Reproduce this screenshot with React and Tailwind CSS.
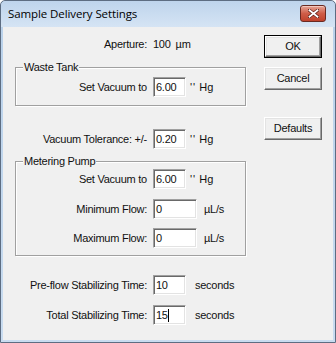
import React from 'react';

const sunken = 'border border-t-[#a0a0a0] border-l-[#a0a0a0] border-b-white border-r-white shadow-[inset_1px_1px_0_#696969,inset_-1px_-1px_0_#e3e3e3]';

const Field = ({ value, w = 'w-[33px]', caret }) => (
    <div className={`${w} h-[20px] bg-white ${sunken} flex items-center pl-[2px] leading-none`}>
        <span>{value}</span>
        {caret && <span className="w-px h-[13px] bg-black" />}
    </div>
);

const Row = ({ label, labelW, value, unit, unitGap = 'ml-[4px]', w, caret, className = '' }) => (
    <div className={`flex items-center h-[20px] ${className}`}>
        <div className={`${labelW} text-right whitespace-nowrap`}>{label}</div>
        <div className="ml-[6px]">
            <Field value={value} w={w} caret={caret} />
        </div>
        <div className={`${unitGap} whitespace-nowrap`}>{unit}</div>
    </div>
);

const Hg = () => (
    <span className="tracking-[1px]">''<span className="tracking-normal"> Hg</span></span>
);

const Button = ({ children, isDefault }) => {
    const face = (
        <div className="h-full w-full flex items-center justify-center bg-[#f0f0f0] border border-t-white border-l-white border-b-[#696969] border-r-[#696969] shadow-[inset_-1px_-1px_0_#a0a0a0,inset_1px_1px_0_#e3e3e3]">
            {children}
        </div>
    );
    if (isDefault) {
        return <div className="w-[58px] h-[23px] border border-black">{face}</div>;
    }
    return <div className="w-[58px] h-[23px]">{face}</div>;
};

const Group = ({ title, children, className = '' }) => (
    <fieldset className={`border border-[#a0a0a0] shadow-[inset_1px_1px_0_#fff,1px_1px_0_#fff] ${className}`}>
        <legend className="ml-[7px] px-[1px] bg-[#f0f0f0] leading-[13px]">{title}</legend>
        {children}
    </fieldset>
);

export default function App() {
    return (
        <div
            className="w-[336px] h-[343px] bg-gradient-to-b from-[#b9d1ea] to-[#c9dcf0] border border-[#5d6d82] rounded-t-[5px] flex flex-col text-[11px] tracking-[-0.25px] text-[#111]"
            style={{ fontFamily: '"Liberation Sans", Arial, sans-serif' }}
        >
            {/* title bar */}
            <div className="h-[26px] flex items-start pl-[7px] pr-[9px] bg-gradient-to-b from-[#bed4ec] to-[#d5e4f4] rounded-t-[5px]">
                <div className="mt-[5px] text-[11.5px] leading-[15px] tracking-[-0.1px] text-black" style={{ fontFamily: '"Open Sans", "Noto Sans", sans-serif' }}>
                    Sample Delivery Settings
                </div>
                <div className="ml-auto mt-[4px] w-[26px] h-[17px] rounded-[3px] border border-[#6a2a22] bg-gradient-to-b from-[#e5a497] via-[#cf5d48] to-[#c0422c] flex items-center justify-center shadow-[inset_0_1px_0_#f3c7bd]">
                    <svg width="11" height="9" viewBox="0 0 11 9">
                        <path d="M1 1 L10 8 M10 1 L1 8" stroke="#5a1a12" strokeWidth="3.2" strokeLinecap="square" />
                        <path d="M1.5 1.3 L9.5 7.7 M9.5 1.3 L1.5 7.7" stroke="#ffffff" strokeWidth="1.8" strokeLinecap="square" />
                    </svg>
                </div>
            </div>

            {/* client area */}
            <div className="flex-1 mx-[2px] mb-[2px] bg-[#f0f0f0] flex">
                <div className="w-[246px] flex flex-col">
                    <div className="flex items-center h-[20px] mt-[7px]">
                        <div className="w-[144px] text-right">Aperture:</div>
                        <div className="ml-[6px]">100</div>
                        <div className="ml-[5px]">µm</div>
                    </div>

                    <Group title="Waste Tank" className="ml-[12px] w-[231px] mt-[7px] pb-[8px]">
                        <Row label="Set Vacuum to" labelW="w-[131px]" value="6.00" unit={<Hg />} className="mt-[3px]" />
                    </Group>

                    <Row label="Vacuum Tolerance: +/-" labelW="w-[144px]" value="0.20" unit={<Hg />} className="mt-[23px]" />

                    <Group title="Metering Pump" className="ml-[12px] w-[231px] mt-[6px] pb-[7px]">
                        <Row label="Set Vacuum to" labelW="w-[131px]" value="6.00" unit={<Hg />} className="mt-[1px]" />
                        <Row label="Minimum Flow:" labelW="w-[131px]" value="0" w="w-[44px]" unit="µL/s" unitGap="ml-[7px]" className="mt-[10px]" />
                        <Row label="Maximum Flow:" labelW="w-[131px]" value="0" w="w-[44px]" unit="µL/s" unitGap="ml-[7px]" className="mt-[9px]" />
                    </Group>

                    <Row label="Pre-flow Stabilizing Time:" labelW="w-[144px]" value="10" unit="seconds" unitGap="ml-[9px]" className="mt-[19px]" />
                    <Row label="Total Stabilizing Time:" labelW="w-[144px]" value="15" caret unit="seconds" unitGap="ml-[9px]" className="mt-[10px]" />
                </div>

                <div className="ml-[15px] pt-[8px] flex flex-col">
                    <Button isDefault>OK</Button>
                    <div className="mt-[9px]">
                        <Button>Cancel</Button>
                    </div>
                    <div className="mt-[27px]">
                        <Button>Defaults</Button>
                    </div>
                </div>
            </div>
        </div>
    );
}
